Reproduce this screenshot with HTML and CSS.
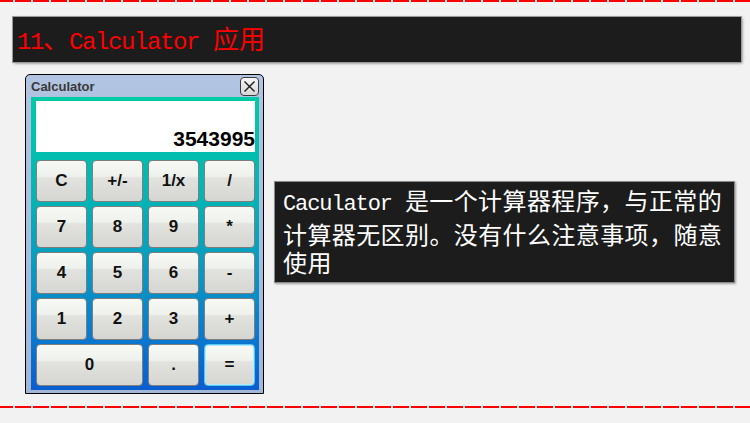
FILE: index.html
```html
<!DOCTYPE html>
<html lang="zh-CN">
<head>
<meta charset="utf-8">
<title>Calculator 应用</title>
<link rel="stylesheet" href="styles.css">
</head>
<body>
<div class="page">
  <div class="dash dash-top"></div>
  <div class="header">
    <h1 class="title"><span class="lat">11</span>、<span class="lat lat-sp">Calculator</span>应用</h1>
  </div>
  <div class="content">
    <div class="window">
      <div class="titlebar">
        <span class="wtitle">Calculator</span>
        <span class="close">
          <svg width="13" height="13" viewBox="0 0 13 13"><path d="M1.5 1.5 L11.5 11.5 M11.5 1.5 L1.5 11.5" stroke="#1a1a1a" stroke-width="1.4" fill="none"/></svg>
        </span>
      </div>
      <div class="calc">
        <div class="display">3543995</div>
        <div class="keys">
          <button class="key">C</button>
          <button class="key">+/-</button>
          <button class="key">1/x</button>
          <button class="key">/</button>
          <button class="key">7</button>
          <button class="key">8</button>
          <button class="key">9</button>
          <button class="key">*</button>
          <button class="key">4</button>
          <button class="key">5</button>
          <button class="key">6</button>
          <button class="key">-</button>
          <button class="key">1</button>
          <button class="key">2</button>
          <button class="key">3</button>
          <button class="key">+</button>
          <button class="key key-zero">0</button>
          <button class="key">.</button>
          <button class="key key-eq">=</button>
        </div>
      </div>
    </div>
    <div class="desc"><span class="lat-d">Caculator</span>是一个计算器程序，与正常的计算器无区别。没有什么注意事项，随意使用</div>
  </div>
  <div class="dash dash-bottom"></div>
</div>
</body>
</html>
```

FILE: styles.css
```css
html, body {
  margin: 0;
  padding: 0;
  background: #f2f2f2;
}

.page {
  width: 750px;
  height: 423px;
  overflow: hidden;
  background: #f2f2f2;
}

.dash {
  height: 2px;
  background: repeating-linear-gradient(90deg, #ff0000 0 16px, transparent 16px 18px);
  background-position: -3px 0;
}

.header {
  margin: 15px 9px 0 13px;
  height: 45px;
  background: #1c1c1c;
  box-shadow: 0 0 0 1px #9a9a9a, 1px 1px 3px rgba(0, 0, 0, 0.55);
  display: flex;
  align-items: center;
  padding-left: 4px;
}

.title {
  margin: 0;
  font-weight: normal;
  color: #ff0000;
  font-size: 26px;
  line-height: 1;
  font-family: "Noto Sans CJK SC", sans-serif;
  white-space: nowrap;
}

.lat {
  font-family: "Liberation Mono", monospace;
  font-size: 24px;
  letter-spacing: -1.4px;
}

.lat-sp {
  padding-right: 14px;
}

.content {
  display: flex;
  align-items: center;
  margin-top: 12px;
  padding-left: 25px;
  height: 320px;
}

.window {
  width: 239px;
  height: 320px;
  box-sizing: border-box;
  border: 1px solid #000;
  border-radius: 5px 5px 0 0;
  background: linear-gradient(#b1c4e2, #a2b7d8);
  display: flex;
  flex-direction: column;
  padding: 0 4px 3px 5px;
  flex: none;
}

.titlebar {
  height: 22px;
  display: flex;
  align-items: center;
  justify-content: space-between;
}

.wtitle {
  font: bold 13px "Liberation Sans", Arial, sans-serif;
  color: #383838;
}

.close {
  width: 17px;
  height: 17px;
  border: 1px solid #3c3c3c;
  border-radius: 4px;
  background: linear-gradient(#f6f6f6, #d6d6d6);
  display: flex;
  align-items: center;
  justify-content: center;
}

.calc {
  flex: 1;
  background: linear-gradient(#00caa6 0%, #04b4b4 35%, #0896c4 62%, #0a74cf 85%, #0a5ecf 100%);
  padding: 4px 4px 4px 5px;
  display: flex;
  flex-direction: column;
}

.display {
  height: 51px;
  box-sizing: border-box;
  background: #fff;
  font: bold 21px/24px "Liberation Sans", Arial, sans-serif;
  color: #000;
  display: flex;
  align-items: flex-end;
  justify-content: flex-end;
  padding-bottom: 1px;
}

.keys {
  margin-top: 8px;
  display: grid;
  grid-template-columns: repeat(4, 51px);
  grid-auto-rows: 42px;
  gap: 4px 5px;
}

.key {
  margin: 0;
  padding: 0;
  border: 1px solid #7e7e7e;
  border-radius: 4px;
  background: linear-gradient(#f7f9f5 0%, #eff1ed 38%, #e2e3df 42%, #d5d5d1 100%);
  font: bold 17px "Liberation Sans", Arial, sans-serif;
  color: #111;
  display: flex;
  align-items: center;
  justify-content: center;
}

.key-zero {
  grid-column: span 2;
}

.key-eq {
  border-color: #56c6f2;
  box-shadow: inset 0 0 0 1px #b6e8fb;
}

.desc {
  margin-left: 10px;
  margin-bottom: 4px;
  width: 461px;
  height: 102px;
  box-sizing: border-box;
  background: #1c1c1c;
  border: 1px solid #8a8a8a;
  box-shadow: 1px 1px 2px rgba(0, 0, 0, 0.35);
  padding: 4px 2px 0 8px;
  color: #fff;
  font-size: 24px;
  line-height: 28.5px;
  letter-spacing: 0.4px;
  font-family: "Noto Sans CJK SC", sans-serif;
}

.lat-d {
  font-family: "Liberation Mono", monospace;
  font-size: 22px;
  letter-spacing: -1.1px;
  padding-right: 13px;
}

.dash-bottom {
  margin-top: 12px;
}
```
